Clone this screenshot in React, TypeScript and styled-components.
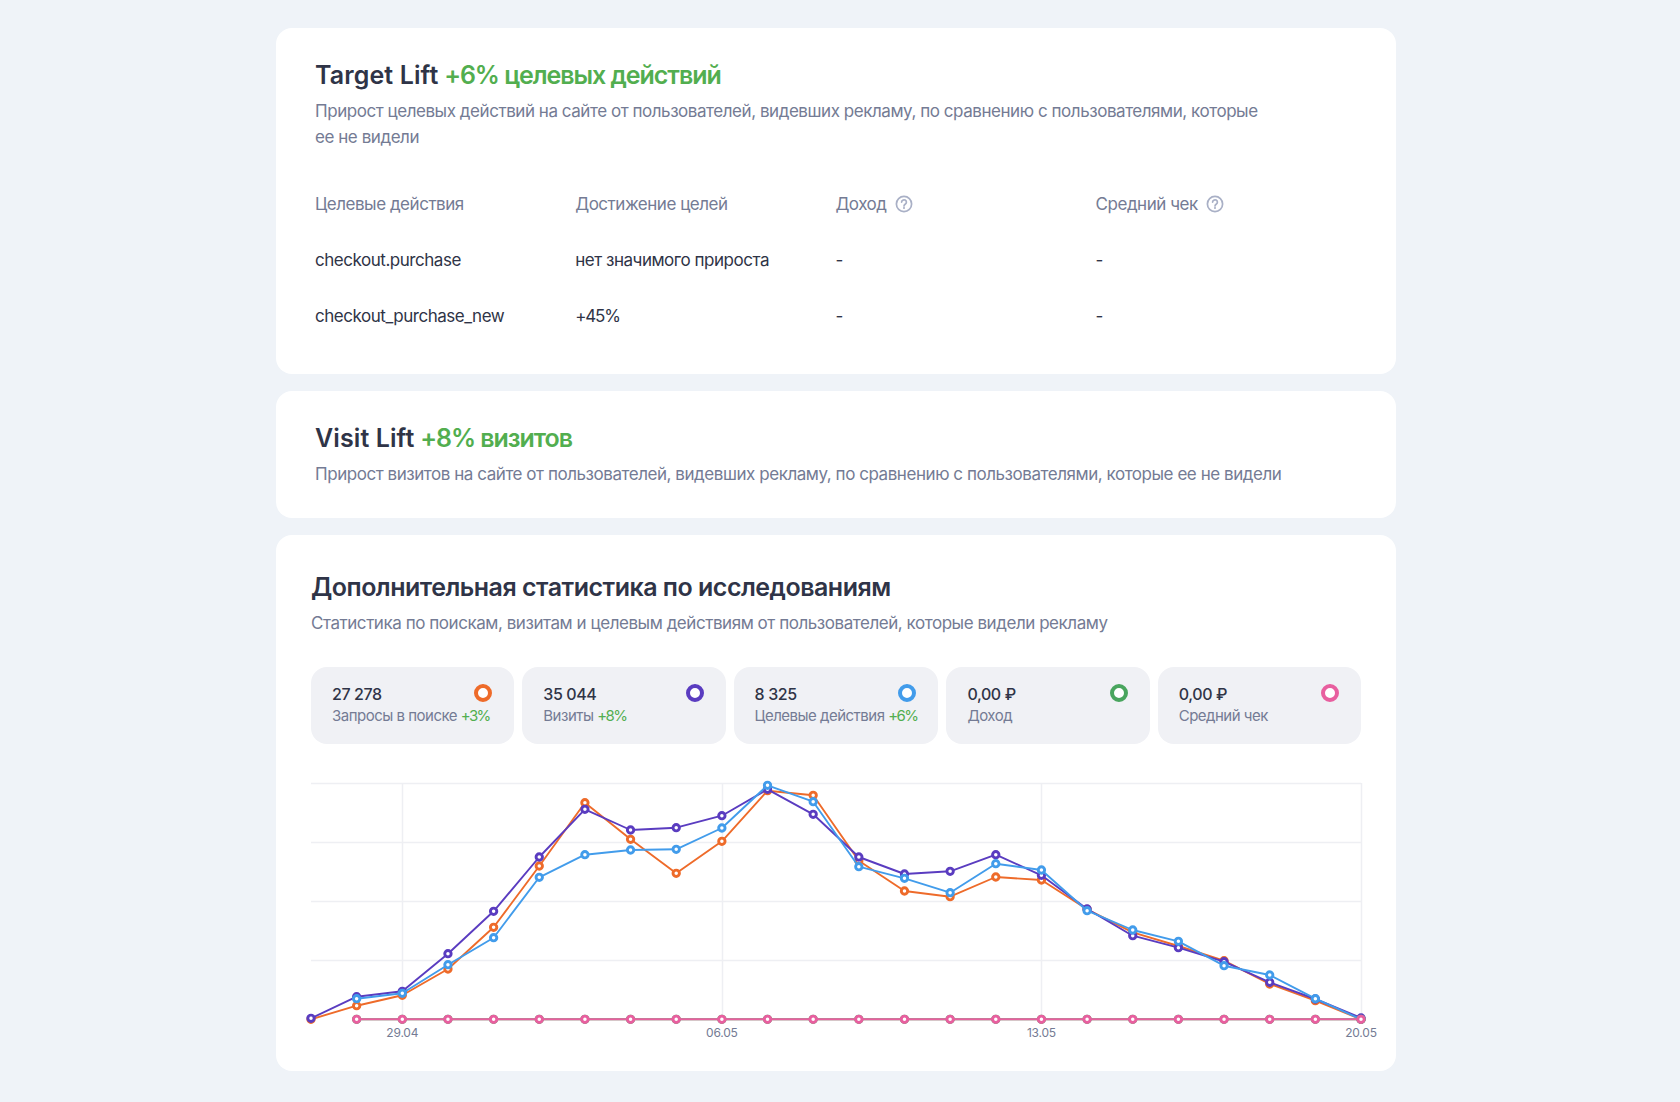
import React from "react";
import styled, { createGlobalStyle } from "styled-components";

const Global = createGlobalStyle`
  html, body { margin: 0; padding: 0; background: #eff3f8; }
  body { font-family: Inter, "Noto Sans", sans-serif; -webkit-font-smoothing: antialiased; }
`;
const Page = styled.div`
  width: 1120px; height: 1102px; box-sizing: border-box;
  margin-left: 276px; padding-top: 28px;
  display: flex; flex-direction: column; gap: 17px;
`;
const Card = styled.section<{ $h: number; $pl: number; $pt?: number }>`
  height: ${p => p.$h}px; box-sizing: border-box;
  background: #fff; border-radius: 16px;
  padding: ${p => p.$pt ?? 32}px 35px 0 ${p => p.$pl}px;
`;
const Title = styled.h2`
  margin: 0; font-size: 25px; line-height: 30px; font-weight: 600;
  letter-spacing: -0.5px; color: #2f3447;
`;
const Latin = styled.span`letter-spacing: 0.1px;`;
const Green = styled.span`color: #52ae4f; letter-spacing: -1.05px;`;
const SmallGreen = styled.span`color: #52ae4f; letter-spacing: -1.6px;`;
const Sub = styled.p<{ $w?: number }>`
  margin: 8px 0 0; font-size: 17px; line-height: 26px; color: #747b94;
  letter-spacing: -0.45px; max-width: ${p => p.$w ?? 1000}px;
`;
const Table = styled.div`
  margin-top: 26px; display: grid; grid-template-columns: repeat(4, 260.2px);
  grid-auto-rows: 56px; align-items: center;
  font-size: 17px; letter-spacing: -0.47px; color: #2f3447;
`;
const Head = styled.div`
  display: flex; align-items: center; gap: 7px; color: #747b94;
`;
const Narrow = styled.span`letter-spacing: -1.2px;`;
const Stats = styled.div`
  margin-top: 31px; display: grid; grid-template-columns: repeat(5, 1fr); gap: 8px; width: 1050px;
`;
const Tile = styled.div`
  height: 77px; box-sizing: border-box; background: #f0f1f5; border-radius: 16px;
  padding: 16px 21px 0; position: relative;
`;
const Num = styled.div`
  font-size: 16px; line-height: 22px; font-weight: 500; letter-spacing: -0.4px; color: #2f3447;
`;
const Label = styled.div`
  font-size: 15px; line-height: 22px; letter-spacing: -0.5px; color: #747b94; white-space: nowrap;
`;
const Ring = styled.i<{ $c: string }>`
  position: absolute; top: 17px; right: 22px; width: 18px; height: 18px; box-sizing: border-box;
  border: 4.5px solid ${p => p.$c}; border-radius: 50%; background: #fff;
`;
const Chart = styled.svg`
  display: block; margin: 36px 0 0 -5px; overflow: visible;
`;
const Tick = styled.text`
  font-size: 12px; fill: #747b94; text-anchor: middle; letter-spacing: -0.2px;
`;

const Help = () => (
  <svg width="20" height="20" viewBox="0 0 20 20" fill="none" stroke="#a9b0c6" strokeWidth="1.7">
    <circle cx="10" cy="10" r="7.6" />
    <path d="M7.6 8.1a2.4 2.3 0 1 1 3.8 1.9c-.9.6-1.4 1-1.4 2" strokeLinecap="round" />
    <circle cx="10" cy="14" r="1.05" fill="#a9b0c6" stroke="none" />
  </svg>
);

const X0 = 311, STEP = 1050 / 23;
const toY = (z: number) => 770 + z / 3;
const series: { c: string; from: number; z: number[] }[] = [
  { c: "#ee6b2a", from: 0, z: [748,707,676,597,472,288,98,208,310,214,62,76,272,363,380,321,330,418,487,528,572,642,692,748] },
  { c: "#5a3cc0", from: 0, z: [745,680,664,551,424,261,118,180,173,137,58,133,261,312,304,254,316,417,497,533,575,637,687,744] },
  { c: "#429ceb", from: 1, z: [0,686,670,584,503,322,254,240,238,174,46,95,290,325,368,281,300,422,480,514,587,615,686,748] },
  { c: "#49a55e", from: 1, z: Array(24).fill(748) },
  { c: "#e85f9f", from: 1, z: Array(24).fill(748) },
];
const TOP = 783;
const tiles = [
  { n: "27 278", l: "Запросы в поиске", g: "+3%", c: "#ee6b2a" },
  { n: "35 044", l: "Визиты", g: "+8%", c: "#5a3cc0" },
  { n: "8 325", l: "Целевые действия", g: "+6%", c: "#429ceb" },
  { n: "0,00 ₽", l: "Доход", g: "", c: "#49a55e" },
  { n: "0,00 ₽", l: "Средний чек", g: "", c: "#e85f9f" },
];
const Plot = () => {
  const ox = 306, oy = TOP - 3;
  return (
    <Chart width="1075" height="262" viewBox={`${ox} ${oy} 1075 262`}>
      {[783.5, 842.5, 901.5, 960.5].map(y => <line key={y} x1={X0} x2={X0 + 1050} y1={y} y2={y} stroke="#eeeff3" strokeWidth="1.5" />)}
      {[2, 9, 16, 23].map(i => <line key={i} x1={Math.round(X0 + i * STEP) + .5} x2={Math.round(X0 + i * STEP) + .5} y1={783} y2={1019} stroke="#eeeff3" strokeWidth="1.5" />)}
      {[["29.04", 2], ["06.05", 9], ["13.05", 16], ["20.05", 23]].map(([t, i]) => <Tick key={t as string} x={X0 + (i as number) * STEP} y={1037}>{t}</Tick>)}
      {series.map(s => {
        const pts = s.z.map((z, i) => ({ x: X0 + i * STEP, y: toY(z), i })).filter(p => p.i >= s.from);
        return (
          <g key={s.c}>
            <polyline points={pts.map(p => `${p.x.toFixed(1)},${p.y.toFixed(1)}`).join(" ")} fill="none" stroke={s.c} strokeWidth="1.9" strokeLinejoin="round" />
            {pts.map(p => <circle key={p.i} cx={p.x} cy={p.y} r="3.2" fill="#fff" stroke={s.c} strokeWidth="2.9" />)}
          </g>
        );
      })}
    </Chart>
  );
};

export default function App() {
  return (
    <>
      <Global />
      <Page>
        <Card $h={346} $pl={39}>
          <Title><Latin>Target Lift</Latin> <Green>+6% целевых действий</Green></Title>
          <Sub $w={950}>Прирост целевых действий на сайте от пользователей, видевших рекламу, по сравнению с пользователями, которые ее не видели</Sub>
          <Table>
            <Head>Целевые действия</Head>
            <Head>Достижение целей</Head>
            <Head>Доход <Help /></Head>
            <Head>Средний чек <Help /></Head>
            <div>checkout.purchase</div><div>нет значимого прироста</div><div>-</div><div>-</div>
            <div>checkout_purchase_new</div><div><Narrow>+45%</Narrow></div><div>-</div><div>-</div>
          </Table>
        </Card>
        <Card $h={127} $pl={39}>
          <Title><Latin>Visit Lift</Latin> <Green>+8% визитов</Green></Title>
          <Sub $w={1060}>Прирост визитов на сайте от пользователей, видевших рекламу, по сравнению с пользователями, которые ее не видели</Sub>
        </Card>
        <Card $h={536} $pl={35} $pt={37}>
          <Title>Дополнительная статистика по исследованиям</Title>
          <Sub>Статистика по поискам, визитам и целевым действиям от пользователей, которые видели рекламу</Sub>
          <Stats>
            {tiles.map(t => (
              <Tile key={t.l}>
                <Num>{t.n}</Num>
                <Label>{t.l} {t.g && <SmallGreen>{t.g}</SmallGreen>}</Label>
                <Ring $c={t.c} />
              </Tile>
            ))}
          </Stats>
          <Plot />
        </Card>
      </Page>
    </>
  );
}
